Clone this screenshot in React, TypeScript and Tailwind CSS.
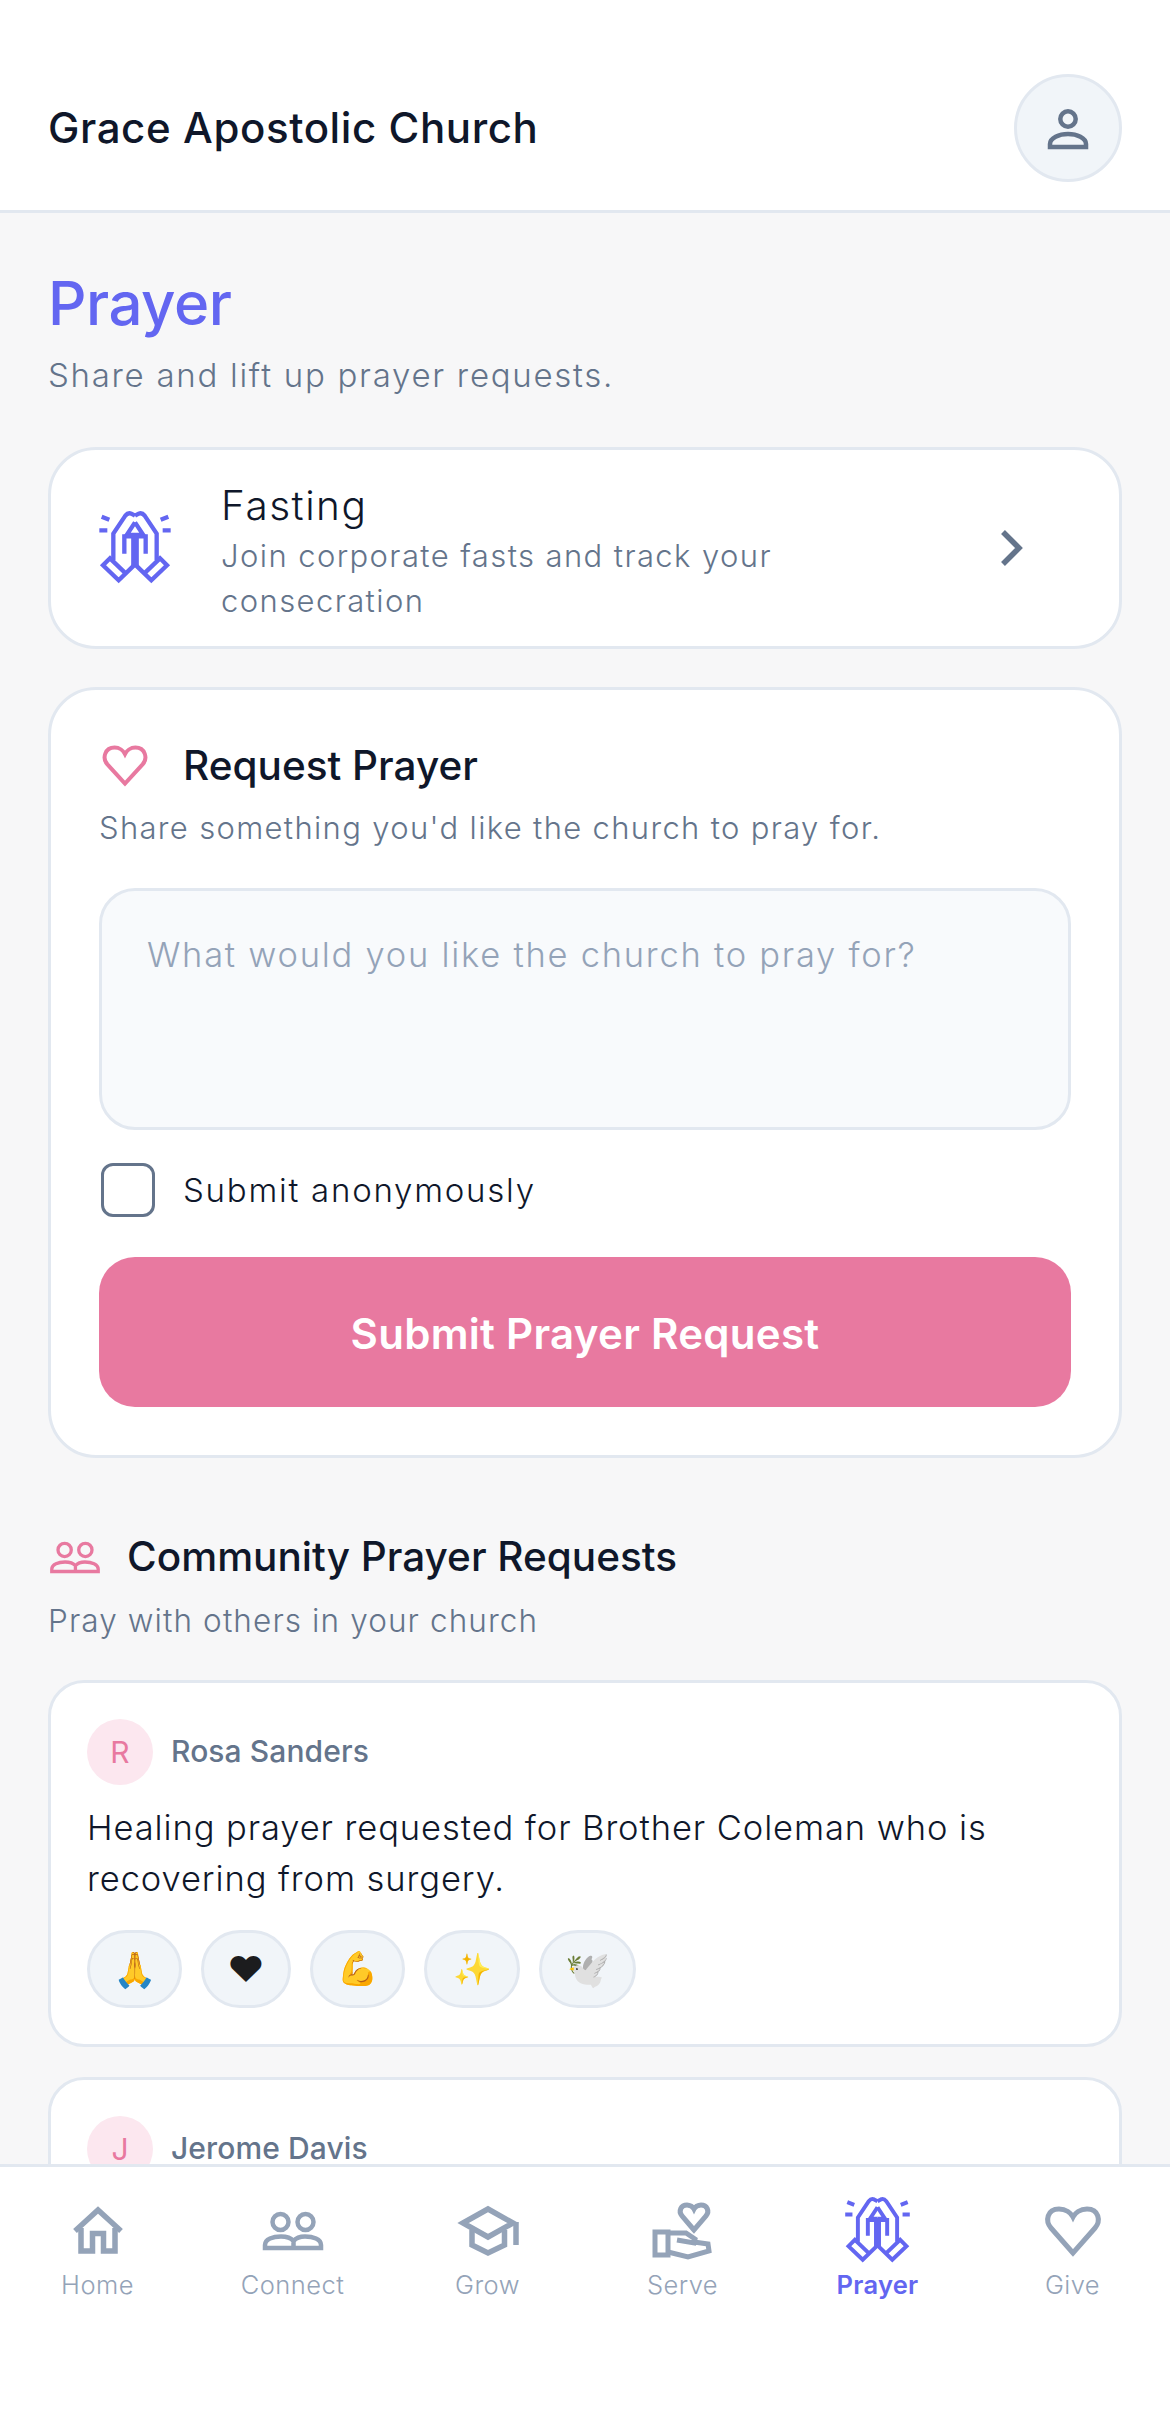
const PINK = '#e879a0';

function PrayIcon({ size, color = '#6366f1' }: { size: number; color?: string }) {
  const half = (
    <>
      <path d="M118 122 L95 113 M112 154 H88" />
      <path d="M195 110 L184 104 Q174 100 166 110 L130 164 V244" />
      <path d="M195 256 L146 304 L99 259 L120 238 L167 283" />
      <path d="M195 130 L170 168 H195" />
      <path d="M163 224 V172 H190 V262" />
    </>
  );
  return (
    <svg width={size} height={size} viewBox="84 96 222 222" fill="none" stroke={color} strokeWidth="13">
      {half}
      <g transform="matrix(-1 0 0 1 390 0)">{half}</g>
    </svg>
  );
}

function HeartIcon({ className, color = PINK, width = 5 }: { className?: string; color?: string; width?: number }) {
  return (
    <svg className={className} viewBox="0 0 60 54" fill="none" stroke={color} strokeWidth={width}>
      <path d="M30 49 L8 25 C1 17 5 4 17 4 C23 4 28 8 30 12 C32 8 37 4 43 4 C55 4 59 17 52 25 Z" />
    </svg>
  );
}

function PeopleIcon({ className, color, width = 4.5 }: { className?: string; color: string; width?: number }) {
  return (
    <svg className={className} viewBox="10 15 60 41" fill="none" stroke={color} strokeWidth={width}>
      <circle cx="27.5" cy="27" r="8" />
      <circle cx="52.5" cy="27" r="8" />
      <path d="M12 53 V50 C12 44 20 41.5 28 41.5 C34 41.5 38 43 40.5 46 C43 43 46 41.5 52 41.5 C60 41.5 68 44 68 50 V53 Z M40.5 46 V53" />
    </svg>
  );
}

const navIcons: Record<string, React.ReactNode> = {
  Home: (
    <svg width="80" height="70" fill="none" stroke="#94a3b8" strokeWidth="5.5">
      <path d="M17 36 L40 15 L63 36" />
      <path d="M23 33 V56 H34.5 V38.5 H45.5 V56 H57 V33" />
    </svg>
  ),
  Connect: (
    <svg width="80" height="70" fill="none" stroke="#94a3b8" strokeWidth="4.5">
      <circle cx="27.5" cy="27" r="8" />
      <circle cx="52.5" cy="27" r="8" />
      <path d="M12 53 V50 C12 44 20 41.5 28 41.5 C34 41.5 38 43 40.5 46 C43 43 46 41.5 52 41.5 C60 41.5 68 44 68 50 V53 Z M40.5 46 V53" />
    </svg>
  ),
  Grow: (
    <svg width="80" height="70" fill="none" stroke="#94a3b8" strokeWidth="5.5">
      <path d="M15 28 L40 14 L65 28 L40 42 Z" />
      <path d="M24 35 V50 L40 58 L56.5 50 V35" />
      <path d="M68 27 V50" />
    </svg>
  ),
  Serve: (
    <svg width="80" height="70" fill="none" stroke="#94a3b8" strokeWidth="5">
      <path d="M51 35 L39 21 C35 16 38 10 44 10 C47 10 50 12 51 14 C52 12 55 10 58 10 C64 10 67 16 63 21 Z" />
      <path d="M12 37 H25 V60 H12 Z" />
      <path d="M25 38 H43 L52 44 L51 48 L34 45 M51 47 L65 49 L66 56 L45 62 L25 57" />
    </svg>
  ),
  Prayer: (
    <div className="flex h-[70px] w-[80px] items-center justify-center">
      <PrayIcon size={67} />
    </div>
  ),
  Give: (
    <svg width="80" height="70" fill="none" stroke="#94a3b8" strokeWidth="5">
      <path d="M40 58 L18 33 C12 26 14 14 26 14 C33 14 38 18 40 22 C42 18 47 14 54 14 C66 14 68 26 62 33 Z" />
    </svg>
  ),
};

const navItems = ['Home', 'Connect', 'Grow', 'Serve', 'Prayer', 'Give'];
const reactions = [
  { emoji: '🙏', cls: 'w-[95px] text-[35px]' },
  { emoji: '♥', cls: 'w-[90px] text-[36px] text-[#1c1c1e]' },
  { emoji: '💪', cls: 'w-[95px] text-[33px]' },
  { emoji: '✨', cls: 'w-[96px] text-[31px]' },
  { emoji: '🕊️', cls: 'w-[97px] text-[36px]' },
];

export default function App() {
  return (
    <div className="flex h-[2436px] w-[1170px] flex-col overflow-hidden bg-[#f7f7f8] font-['Inter',sans-serif] text-[#0f172a]">
      <header className="flex h-[213px] shrink-0 items-end justify-between border-b-[3px] border-[#e2e8f0] bg-white px-[48px] pb-[28px]">
        <h1 className="mb-[26px] text-[42px] leading-[56px] font-medium tracking-[0.6px]">Grace Apostolic Church</h1>
        <button className="flex h-[108px] w-[108px] items-center justify-center rounded-full border-[3px] border-[#e2e8f0] bg-[#f1f5f9]">
          <svg width="46" height="44" viewBox="0 0 46 44" fill="none" stroke="#64748b" strokeWidth="4.5">
            <circle cx="23" cy="13" r="7.7" />
            <path d="M5 41 V38 C5 32 14 28 23 28 C32 28 41 32 41 38 V41 Z" />
          </svg>
        </button>
      </header>

      <main className="min-h-0 flex-1 overflow-hidden px-[48px] pt-[54px]">
        <h2 className="text-[60px] leading-[72px] font-medium tracking-[-0.5px] text-[#6366f1]">Prayer</h2>
        <p className="mt-[12px] text-[33px] leading-[48px] font-[350] tracking-[1.72px] text-[#64748b]">Share and lift up prayer requests.</p>

        <section className="mt-[48px] flex h-[202px] items-center rounded-[48px] border-[3px] border-[#e2e8f0] bg-white pr-[94px] pl-[47px]">
          <PrayIcon size={74} />
          <div className="ml-[49px] flex-1 pt-[4px]">
            <div className="text-[40.5px] leading-[56px] font-[350] tracking-[1.5px]">Fasting</div>
            <div className="mt-[-1px] w-[620px] text-[31px] leading-[45px] font-[350] tracking-[1.4px] text-[#64748b]">Join corporate fasts and track your consecration</div>
          </div>
          <svg width="26" height="38" fill="none" stroke="#64748b" strokeWidth="5.5">
            <path d="M4 3 L20 19 L4 35" />
          </svg>
        </section>

        <section className="mt-[38px] rounded-[48px] border-[3px] border-[#e2e8f0] bg-white p-[48px]">
          <div className="flex h-[56px] items-center">
            <HeartIcon className="ml-[2px] h-[44px] w-[48px]" />
            <div className="ml-[34px] text-[40.5px] leading-[56px] font-medium">Request Prayer</div>
          </div>
          <p className="mt-[11px] text-[31px] leading-[46px] font-[350] tracking-[1.33px] text-[#64748b]">Share something you'd like the church to pray for.</p>
          <div className="mt-[37px] h-[242px] rounded-[36px] border-[3px] border-[#e2e8f0] bg-[#f8fafc] px-[45px] pt-[40px] text-[34.5px] leading-[48px] font-[350] tracking-[1.74px] text-[#94a3b8]">
            What would you like the church to pray for?
          </div>
          <label className="mt-[33px] flex h-[54px] items-center">
            <span className="ml-[2px] h-[54px] w-[54px] rounded-[12px] border-[3px] border-[#64748b] bg-white" />
            <span className="ml-[28px] pt-[2px] text-[33px] font-[350] tracking-[1.76px]">Submit anonymously</span>
          </label>
          <button className="mt-[40px] h-[150px] w-full rounded-[36px] bg-[#e879a0] pt-[2px] text-[42px] font-semibold tracking-[0.3px] text-white">Submit Prayer Request</button>
        </section>

        <section className="mt-[69px]">
          <div className="flex h-[60px] items-center">
            <PeopleIcon className="ml-[2px] h-[34px] w-[50px]" color={PINK} width={4} />
            <h3 className="ml-[27px] text-[40.5px] leading-[56px] font-medium">Community Prayer Requests</h3>
          </div>
          <p className="mt-[10px] text-[31.5px] leading-[48px] font-[350] tracking-[1.1px] text-[#64748b]">Pray with others in your church</p>

          <article className="mt-[35px] rounded-[36px] border-[3px] border-[#e2e8f0] bg-white p-[36px]">
            <div className="flex items-center">
              <span className="flex h-[66px] w-[66px] items-center justify-center rounded-full bg-[#fce7ef] text-[30px] text-[#e879a0]">R</span>
              <span className="ml-[18px] pb-[2px] text-[30px] font-medium tracking-[0.1px] text-[#64748b]">Rosa Sanders</span>
            </div>
            <p className="mt-[17px] text-[34.5px] leading-[51px] font-[350] tracking-[0.91px]">Healing prayer requested for Brother Coleman who is recovering from surgery.</p>
            <div className="mt-[26px] flex gap-[19px]">
              {reactions.map((r) => (
                <span key={r.emoji} className={`flex h-[78px] items-center justify-center rounded-full border-[3px] border-[#e2e8f0] bg-[#f1f5f9] ${r.cls}`}>
                  {r.emoji}
                </span>
              ))}
            </div>
          </article>

          <article className="mt-[30px] rounded-[36px] border-[3px] border-[#e2e8f0] bg-white p-[36px]">
            <div className="flex items-center">
              <span className="flex h-[66px] w-[66px] items-center justify-center rounded-full bg-[#fce7ef] text-[30px] text-[#e879a0]">J</span>
              <span className="ml-[18px] pb-[2px] text-[30px] font-medium tracking-[0.1px] text-[#64748b]">Jerome Davis</span>
            </div>
          </article>
        </section>
      </main>

      <nav className="flex h-[272px] shrink-0 border-t-[3px] border-[#e2e8f0] bg-white pt-[28px]">
        {navItems.map((item) => (
          <div key={item} className="flex w-[195px] flex-col items-center">
            {navIcons[item]}
            <span className={item === 'Prayer' ? 'mt-[2px] text-[25.5px] leading-[36px] font-semibold tracking-[0.3px] text-[#6366f1]' : 'mt-[2px] text-[25.5px] leading-[36px] font-[350] tracking-[0.45px] text-[#94a3b8]'}>
              {item}
            </span>
          </div>
        ))}
      </nav>
    </div>
  );
}
